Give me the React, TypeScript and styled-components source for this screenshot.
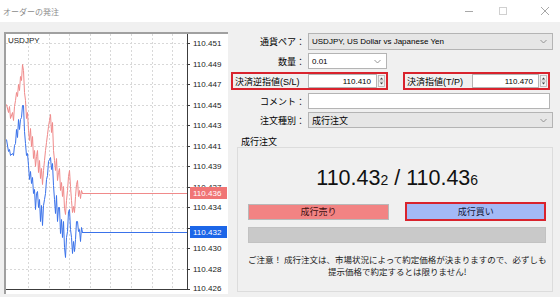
import React from 'react';
import styled, { createGlobalStyle } from 'styled-components';

const GlobalStyle = createGlobalStyle`
  html, body {
    margin: 0;
    padding: 0;
    background: #f0f0f0;
  }
  body {
    font-family: "Liberation Sans", "Noto Sans CJK JP", sans-serif;
    color: #000;
  }
`;

const Window = styled.div`
  width: 560px;
  height: 297px;
  display: flex;
  flex-direction: column;
  background: #f0f0f0;
  overflow: hidden;
`;

const TitleBar = styled.div`
  height: 22px;
  flex: none;
  background: #fff;
  display: flex;
  align-items: center;
  justify-content: space-between;
  padding: 0 10px 0 3px;
`;

const Title = styled.span`
  font-family: "Noto Sans CJK JP", sans-serif;
  font-size: 8px;
  color: #8c8c8c;
`;

const WinControls = styled.div`
  display: flex;
  align-items: center;
`;

const WinButton = styled.span<{ $gap?: number }>`
  width: 10px;
  height: 10px;
  margin-left: ${p => p.$gap ?? 0}px;
  display: flex;
  svg { display: block; }
`;

const Body = styled.div`
  flex: 1;
  display: flex;
  gap: 3px;
  padding: 10px 7px 0 4px;
  min-height: 0;
`;

const ChartFrame = styled.div`
  width: 224px;
  height: 262px;
  flex: none;
  box-sizing: border-box;
  background: #fff;
  border-top: 2px solid #a0a0a0;
  border-left: 2px solid #a0a0a0;

  svg { display: block; }
`;

const RightPanel = styled.div`
  flex: 1;
  display: flex;
  flex-direction: column;
  gap: 3px;
  padding-top: 1px;
  padding-bottom: 5px;
`;

const FormRow = styled.div<{ $h: number }>`
  display: flex;
  align-items: center;
  height: ${p => p.$h}px;
  flex: none;
`;

const FieldLabel = styled.span`
  width: 77px;
  flex: none;
  box-sizing: border-box;
  padding-right: 3px;
  text-align: right;
  font-family: "Noto Sans CJK JP", sans-serif;
  font-size: 9px;
  white-space: nowrap;
`;

const Select = styled.div<{ $w: number; $plain?: boolean }>`
  width: ${p => p.$w}px;
  height: 100%;
  box-sizing: border-box;
  border: 1px solid #b4b4b4;
  background: ${p => (p.$plain ? '#fff' : '#e6e6e6')};
  display: flex;
  align-items: center;
  justify-content: space-between;
  padding: 0 5px 0 3px;
  font-size: 8px;
  white-space: nowrap;
`;

const SelectText = styled.span<{ $jp?: boolean }>`
  font-family: ${p => (p.$jp ? '"Noto Sans CJK JP", sans-serif' : '"Liberation Sans", sans-serif')};
  font-size: ${p => (p.$jp ? 9 : 8)}px;
`;

const TextInput = styled.div<{ $w: number }>`
  width: ${p => p.$w}px;
  height: 100%;
  box-sizing: border-box;
  border: 1px solid #b4b4b4;
  background: #fff;
`;

const RedBox = styled.div<{ $w: number; $gap?: number }>`
  width: ${p => p.$w}px;
  height: 100%;
  margin-left: ${p => p.$gap ?? 0}px;
  box-sizing: border-box;
  border: 2px solid #d9232d;
  display: flex;
  align-items: stretch;
`;

const BoxLabel = styled.span<{ $w: number }>`
  width: ${p => p.$w}px;
  flex: none;
  box-sizing: border-box;
  padding-left: 2px;
  display: flex;
  align-items: center;
  font-family: "Liberation Sans", "Noto Sans CJK JP", sans-serif;
  font-size: 9px;
  white-space: nowrap;
`;

const NumberInput = styled.div`
  flex: 1;
  box-sizing: border-box;
  border: 1px solid #b4b4b4;
  background: #fff;
  display: flex;
  align-items: center;
  justify-content: flex-end;
  padding-right: 5px;
  font-size: 8px;
`;

const Spinner = styled.span`
  width: 9px;
  flex: none;
  display: flex;
  align-items: center;
  justify-content: center;
`;

const Group = styled.div`
  flex: 1;
  display: flex;
  flex-direction: column;
  margin-top: 5px;
`;

const GroupLabel = styled.div`
  height: 11px;
  line-height: 11px;
  margin-left: 10px;
  font-family: "Noto Sans CJK JP", sans-serif;
  font-size: 9px;
`;

const GroupPanel = styled.div`
  flex: 1;
  margin-left: 6px;
  border: 1px solid #dcdcdc;
  display: flex;
  flex-direction: column;
  padding: 0 6px 0 10px;
`;

const Price = styled.div`
  margin-top: 18px;
  height: 24px;
  line-height: 24px;
  text-align: center;
  font-family: "Liberation Sans", sans-serif;
  font-size: 21.5px;
  color: #111;
  white-space: nowrap;

  small {
    font-size: 14px;
  }
`;

const ButtonRow = styled.div`
  margin-top: 12px;
  height: 19px;
  display: grid;
  grid-template-columns: 1fr 1fr;
  gap: 16px;
  align-items: center;
`;

const OrderButton = styled.div<{ $side: 'sell' | 'buy' }>`
  box-sizing: border-box;
  height: ${p => (p.$side === 'buy' ? 19 : 16)}px;
  border: ${p => (p.$side === 'buy' ? '2px solid #d9232d' : '1px solid #b8b8b8')};
  background: ${p => (p.$side === 'buy' ? '#a3b9f6' : '#f28383')};
  color: ${p => (p.$side === 'buy' ? '#14183a' : '#3d0f0f')};
  display: flex;
  align-items: center;
  justify-content: center;
  font-family: "Noto Sans CJK JP", sans-serif;
  font-size: 9px;
`;

const StatusBar = styled.div`
  margin-top: 6px;
  height: 16px;
  background: #c9c9c9;
  border: 1px solid #c2c2c2;
  box-sizing: border-box;
`;

const Notice = styled.p`
  margin: 10px 0 0;
  font-family: "Noto Sans CJK JP", sans-serif;
  font-size: 8.5px;
  line-height: 12px;
  text-align: center;
  color: #1a1a1a;
  white-space: nowrap;
`;

const Chevron = () => (
  <svg width="7" height="5" viewBox="0 0 7 5">
    <polyline points="0.5,1 3.5,4 6.5,1" fill="none" stroke="#8a8a8a" strokeWidth="0.9" />
  </svg>
);

const SpinArrows = () => (
  <svg width="7" height="12" viewBox="0 0 7 12">
    <rect x="0.5" y="0.5" width="6" height="11" fill="#f4f4f4" stroke="#b4b4b4" strokeWidth="0.8" />
    <line x1="0.5" y1="6" x2="6.5" y2="6" stroke="#b4b4b4" strokeWidth="0.8" />
    <polygon points="1.8,4.4 3.5,2.4 5.2,4.4" fill="#444" />
    <polygon points="1.8,7.6 3.5,9.6 5.2,7.6" fill="#444" />
  </svg>
);

// price axis
const axisLabels = [
  '110.451', '110.449', '110.447', '110.445', '110.443', '110.441', '110.439',
  '110.437', '110.434', '110.432', '110.430', '110.428', '110.426',
];
const rowY = (i: number) => Math.round(9 + i * 20.5) + 0.5;
const gridX = Array.from({ length: 8 }, (_, j) => Math.round(22 + j * 20.6) + 0.5);

// ask line, page coords (x, y)
const askPts: [number, number][] = [
  [6, 104], [8, 112], [9, 106], [10, 118], [12, 112], [13, 120], [14, 106], [15, 100],
  [16, 92], [17, 96], [18, 84], [19, 90], [20, 76], [21, 80], [22, 64], [23, 70],
  [24, 92], [25, 100], [26, 118], [27, 112], [28, 130], [29, 140], [30, 128], [31, 146],
  [32, 136], [33, 158], [34, 150], [35, 166], [36, 156], [37, 150], [38, 172], [39, 160],
  [40, 178], [41, 168], [42, 184], [43, 170], [44, 160], [45, 150], [46, 142], [47, 134],
  [48, 126], [49, 120], [50, 114], [51, 132], [52, 122], [53, 150], [54, 160], [55, 170],
  [56, 158], [57, 180], [58, 172], [59, 168], [60, 190], [61, 182], [62, 196], [63, 186],
  [64, 208], [65, 214], [66, 200], [67, 190], [68, 176], [69, 170], [70, 186], [71, 200],
  [72, 212], [73, 206], [74, 212], [75, 196], [76, 184], [77, 180], [78, 196], [79, 190],
  [80, 198], [81, 190], [82, 193],
];

const toSvg = (pts: [number, number][]) =>
  pts.map(([x, y]) => `${x - 6 + 0.5},${y - 34 + 0.5}`).join(' ');

const bidPts: [number, number][] = askPts.map(([x, y], i) => {
  if (i === askPts.length - 1) return [x, 232];
  const jitter = ((i * 7) % 5) - 2;
  return [x, y + 39 + jitter * 2];
});

const PriceChart = () => (
  <svg width="222" height="260" viewBox="0 0 222 260">
    {axisLabels.map((_, i) => (
      <line key={'h' + i} x1="0" x2="181" y1={rowY(i)} y2={rowY(i)} stroke="#d8d8d8" strokeWidth="1" strokeDasharray="2 2" />
    ))}
    {gridX.map((x, j) => (
      <line key={'v' + j} x1={x} x2={x} y1="0" y2="255" stroke="#d8d8d8" strokeWidth="1" strokeDasharray="2 2" />
    ))}
    <text x="2" y="6" dominantBaseline="central" fontFamily="Liberation Sans, sans-serif" fontSize="8" fill="#222">USDJPY</text>
    <line x1="181.5" x2="181.5" y1="0" y2="256" stroke="#3c3c3c" strokeWidth="1" />
    <line x1="0" x2="182" y1="255.5" y2="255.5" stroke="#3c3c3c" strokeWidth="1" />
    {axisLabels.map((label, i) => (
      <g key={label}>
        <line x1="181" x2="184" y1={rowY(i)} y2={rowY(i)} stroke="#3c3c3c" strokeWidth="1" />
        <text x="187" y={Math.min(rowY(i), 254)} dominantBaseline="central" fontFamily="Liberation Sans, sans-serif" fontSize="8" fill="#222">
          {label}
        </text>
      </g>
    ))}
    <polyline points={toSvg(askPts)} fill="none" stroke="#f08a8a" strokeWidth="1" strokeLinejoin="miter" />
    <polyline points={toSvg(bidPts)} fill="none" stroke="#3a72ea" strokeWidth="1" strokeLinejoin="miter" />
    <line x1="76" x2="181" y1="159.5" y2="159.5" stroke="#f08a8a" strokeWidth="1" />
    <line x1="76" x2="181" y1="198.5" y2="198.5" stroke="#3a72ea" strokeWidth="1" />
    <rect x="184" y="153" width="37" height="12" fill="#f07575" />
    <text x="187" y="159.5" dominantBaseline="central" fontFamily="Liberation Sans, sans-serif" fontSize="8" fill="#fff">110.436</text>
    <rect x="184" y="192" width="37" height="12" fill="#1c66e8" />
    <text x="187" y="198.5" dominantBaseline="central" fontFamily="Liberation Sans, sans-serif" fontSize="8" fill="#fff">110.432</text>
  </svg>
);

export default function App() {
  return (
    <Window>
      <GlobalStyle />
      <TitleBar>
        <Title>オーダーの発注</Title>
        <WinControls>
          <WinButton>
            <svg width="10" height="10" viewBox="0 0 10 10">
              <line x1="1" x2="9" y1="5.5" y2="5.5" stroke="#a8a8a8" strokeWidth="1" />
            </svg>
          </WinButton>
          <WinButton $gap={24}>
            <svg width="10" height="10" viewBox="0 0 10 10">
              <rect x="1.5" y="1.5" width="7" height="7" fill="none" stroke="#d0d0d0" strokeWidth="1" />
            </svg>
          </WinButton>
          <WinButton $gap={32}>
            <svg width="10" height="10" viewBox="0 0 10 10">
              <path d="M1 1 L9 9 M9 1 L1 9" stroke="#a8a8a8" strokeWidth="1" />
            </svg>
          </WinButton>
        </WinControls>
      </TitleBar>
      <Body>
        <ChartFrame>
          <PriceChart />
        </ChartFrame>
        <RightPanel>
          <FormRow $h={17}>
            <FieldLabel>通貨ペア：</FieldLabel>
            <Select $w={245}>
              <SelectText>USDJPY, US Dollar vs Japanese Yen</SelectText>
              <Chevron />
            </Select>
          </FormRow>
          <FormRow $h={16}>
            <FieldLabel>数量：</FieldLabel>
            <Select $w={79} $plain>
              <SelectText>0.01</SelectText>
              <Chevron />
            </Select>
          </FormRow>
          <FormRow $h={18}>
            <RedBox $w={157}>
              <BoxLabel $w={75}>決済逆指値(S/L)</BoxLabel>
              <NumberInput>110.410</NumberInput>
              <Spinner><SpinArrows /></Spinner>
            </RedBox>
            <RedBox $w={147} $gap={15}>
              <BoxLabel $w={67}>決済指値(T/P)</BoxLabel>
              <NumberInput>110.470</NumberInput>
              <Spinner><SpinArrows /></Spinner>
            </RedBox>
          </FormRow>
          <FormRow $h={16}>
            <FieldLabel>コメント：</FieldLabel>
            <TextInput $w={242} />
          </FormRow>
          <FormRow $h={16}>
            <FieldLabel>注文種別：</FieldLabel>
            <Select $w={245}>
              <SelectText $jp>成行注文</SelectText>
              <Chevron />
            </Select>
          </FormRow>
          <Group>
            <GroupLabel>成行注文</GroupLabel>
            <GroupPanel>
              <Price>
                110.43<small>2</small> / 110.43<small>6</small>
              </Price>
              <ButtonRow>
                <OrderButton $side="sell">成行売り</OrderButton>
                <OrderButton $side="buy">成行買い</OrderButton>
              </ButtonRow>
              <StatusBar />
              <Notice>
                ご注意！ 成行注文は、市場状況によって約定価格が決まりますので、必ずしも
                <br />
                提示価格で約定するとは限りません!
              </Notice>
            </GroupPanel>
          </Group>
        </RightPanel>
      </Body>
    </Window>
  );
}
